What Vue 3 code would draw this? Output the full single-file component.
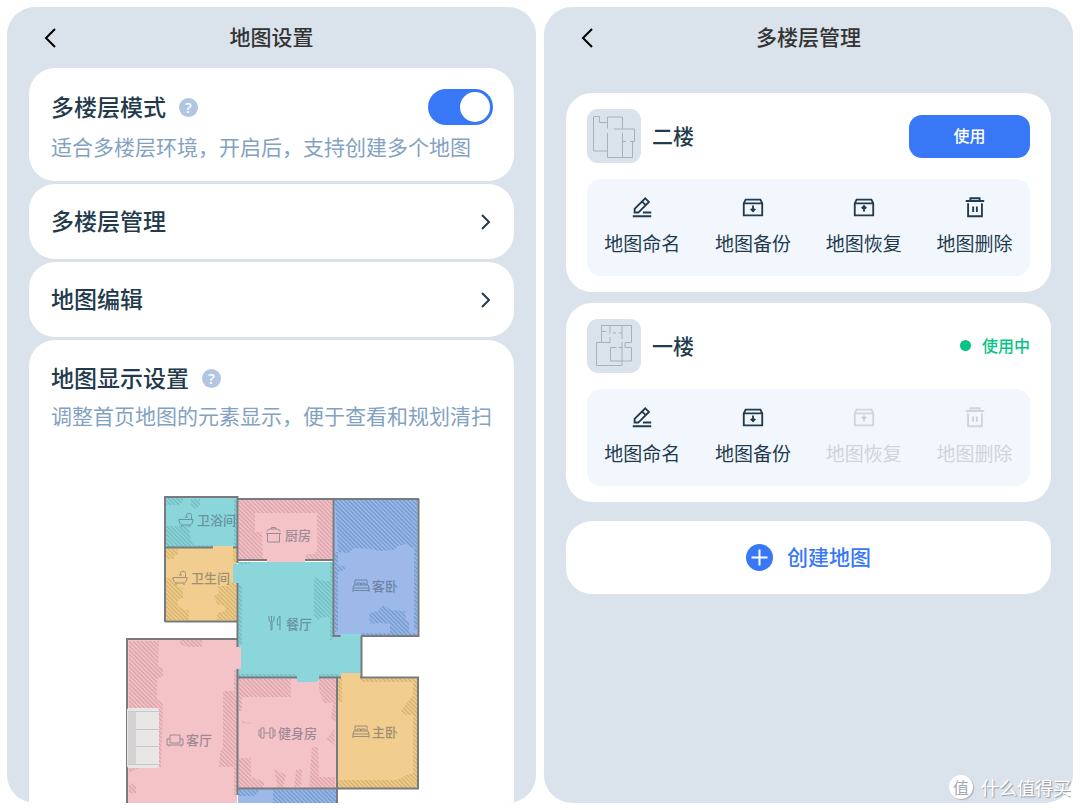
<template>
  <div class="page">
    <section class="panel">
      <header class="panel-header">
        <button class="back" type="button" aria-label="返回">
          <svg width="12" height="22" viewBox="0 0 12 22"><path d="M11 2 2 11l9 9" /></svg>
        </button>
        <h1>地图设置</h1>
      </header>

      <div class="settings">
        <div class="card setting">
          <div class="setting-title">
            <label for="multi-floor">多楼层模式</label>
            <button class="help" type="button" aria-label="多楼层模式说明">?</button>
            <input id="multi-floor" v-model="multiFloor" class="switch" type="checkbox" role="switch" />
          </div>
          <p class="desc">适合多楼层环境，开启后，支持创建多个地图</p>
        </div>

        <a v-for="link in links" :key="link" class="card link-row" href="#">
          <span>{{ link }}</span>
          <svg width="10" height="18" viewBox="0 0 10 18"><path d="m1 2 7 7-7 7" /></svg>
        </a>

        <div class="card setting map-card">
          <div class="setting-title">
            <h2>地图显示设置</h2>
            <button class="help" type="button" aria-label="地图显示设置说明">?</button>
          </div>
          <p class="desc">调整首页地图的元素显示，便于查看和规划清扫</p>

          <svg class="map" width="311" height="313" viewBox="116 490 311 313">
            <defs>
              <pattern
                v-for="(c, name) in colors"
                :id="'hatch-' + name"
                :key="name"
                width="3"
                height="3"
                patternUnits="userSpaceOnUse"
                patternTransform="rotate(-45)"
              >
                <rect width="1.3" height="3" :fill="c.hatch" />
              </pattern>
            </defs>

            <g v-for="room in rooms" :key="room.id">
              <path :d="room.area" :fill="colors[room.color].fill" />
              <path :d="room.hatch" :fill="`url(#hatch-${room.color})`" />
            </g>

            <path class="wall" :d="walls" />
            <path :d="gymDoor" :fill="colors.cyan.fill" />

            <g class="sofa">
              <rect x="127" y="708" width="32" height="60" rx="2" fill="#e9e6e6" />
              <rect x="128" y="711" width="8" height="54" fill="#d5d2d3" />
              <path d="M128 711.500h31M136 729.500h23M136 746.500h23M128 764.500h31" />
            </g>

            <g v-for="label in labels" :key="label.text" class="room-label">
              <path :d="icons[label.icon]" :transform="`translate(${label.ix} ${label.iy})`" />
              <text :x="label.x" :y="label.y">{{ label.text }}</text>
            </g>
          </svg>
        </div>
      </div>
    </section>

    <section class="panel">
      <header class="panel-header">
        <button class="back" type="button" aria-label="返回">
          <svg width="12" height="22" viewBox="0 0 12 22"><path d="M11 2 2 11l9 9" /></svg>
        </button>
        <h1>多楼层管理</h1>
      </header>

      <div class="floors">
        <article v-for="floor in floors" :key="floor.name" class="card floor">
          <div class="floor-head">
            <svg class="thumb" width="54" height="54" viewBox="0 0 54 54"><path :d="floor.plan" /></svg>
            <h2>{{ floor.name }}</h2>
            <span v-if="floor.active" class="active">使用中</span>
            <button v-else class="use" type="button">使用</button>
          </div>
          <div class="actions">
            <button
              v-for="action in actions"
              :key="action.text"
              type="button"
              :disabled="floor.active && action.lock"
            >
              <svg width="24" height="24" viewBox="-1 -1 26 26"><path :d="action.icon" /></svg>
              {{ action.text }}
            </button>
          </div>
        </article>
      </div>

      <button class="card create" type="button">
        <svg width="27" height="27" viewBox="0 0 27 27">
          <circle cx="13.500" cy="13.500" r="13.500" />
          <path d="M13.500 5.500v16M5.500 13.500h16" />
        </svg>
        <span>创建地图</span>
      </button>
    </section>

    <div class="watermark">
      <span class="watermark-logo">值</span>
      <span>什么值得买</span>
    </div>
  </div>
</template>

<script setup>
import { ref } from 'vue'

const multiFloor = ref(true)
const links = ['多楼层管理', '地图编辑']

const colors = {
  cyan: { fill: '#8bd6db', hatch: '#70b8bc' },
  orange: { fill: '#f1cd8f', hatch: '#d3b068' },
  pink: { fill: '#f3c3c8', hatch: '#d9a0a8' },
  blue: { fill: '#9cb9ea', hatch: '#6f98cc' },
}

// room areas, the doorways stick out a little into the next room
const rooms = [
  {
    id: 'bath',
    color: 'cyan',
    area: 'M165 497h72v51h-72z',
    hatch: 'M166 498h17v4l-4 3h-13zM191 499h9v6l-4 4-5-4zM166 526h22l2 8 1 7 3 4h19v2h-47zM234 500h3v46h-3z',
  },
  {
    id: 'toilet',
    color: 'orange',
    area: 'M165 548h48v-2h20v2h4v73h-72z',
    hatch:
      'M166 549h12v5l-4 2v3h-8zM166 578h6l3 6 8 5v9l-5 2v6l6 4h5v10h-23zM217 586h9l7-4h3v38h-19v-7l8-2v-5l-8-2-3-8 5-3zM233 549h4v13h-4z',
  },
  {
    id: 'kitchen',
    color: 'pink',
    area: 'M238 499h95v61h-28v2h-38v-2h-29z',
    hatch: 'M239 500h93v60h-26v-6h8l3-3v-38h-62v19h7l1 28h-24z',
  },
  {
    id: 'dining',
    color: 'cyan',
    area: 'M238 562h95v74h7v-3h21v44H238v-94h-5v-19h5z',
    hatch:
      'M239 585h3v60h-3zM240 562h10v2h-10zM314 577l10 4h8v36h-8l-6 3-4-4zM330 562h3v78h-3zM239 674h58v3h-58zM319 674h20v3h-20z',
  },
  {
    id: 'guest',
    color: 'blue',
    area: 'M334 499h84v137h-57v-2h-20v2h-7z',
    hatch:
      'M335 500h82v48h-4l-7-4-8 2-4 4-14 1-9-2-17-1-5 5-11-1zM335 552h3v80h-3zM338 565l8 2-2 3-6 2zM414 548h3v82h-3zM369 613l9-2 5-6 8 5 14 1 1 9 3 2v12h-19v-10l-9-1-11 1zM361 633h56v3h-56z',
  },
  {
    id: 'living',
    color: 'pink',
    area: 'M127 639h110v8h4v22h-4v134h-110z',
    hatch:
      'M129 641h30l-1 25 5 3v7l-6 3v20l6 5-2 63h-2v-59h-30zM180 640h22v7h-14l-8-3zM223 691h14v76h-18l1-15 3-5zM234 670h3v125h-3zM129 783l7 2v8h-7zM129 768h10l-10 5z',
  },
  {
    id: 'gym',
    color: 'pink',
    area: 'M238 678h98v110h-98z',
    hatch:
      'M239 679h52v18h-49v14h-3zM319 679h17v42l-5-2 2-16h-9l-5-13zM326 740l8-11 1 16zM242 721l13 3-13-1zM239 758h12v19l14 5-2 6h-24zM312 746l6 2 1 29h16v11h-26zM274 769l12 6-3 13h-5zM296 770l6-1-1 17-7 2z',
  },
  {
    id: 'master',
    color: 'orange',
    area: 'M338 678h3v-5h20v5h57v110h-80z',
    hatch:
      'M361 679h56v3h-56zM413 682h4v92h-4zM338 780h59l12-6h8v14h-79zM338 679h4v23h-4zM401 711l11-15 3 2v17h-9z',
  },
  {
    id: 'balcony',
    color: 'blue',
    area: 'M238 789h98v14h-98z',
    hatch: 'M239 790h21l-6 6h-15zM273 790h63v13h-63z',
  },
]

const walls = [
  'M213 547.500H165M233 547.500h4M165 496v126M164 497h73M165 621.500h73',
  'M237.500 496v67M237.500 583v64M237 499h182M267 560h-29M305 560h28',
  'M333.500 499v137h7M361 636h57.500V499M361.500 636v42',
  'M237 639H127v164M237.500 669v126M238 677.500h59M319 677.500h22',
  'M360 677.500h58v111M238 788.500h181M337 678v125',
].join('')

const gymDoor = 'M297 676h22v4l-2 2h-19l-1-1z'

const icons = {
  tub: 'M0 6.500h14c0 4-2 5.500-4 5.500H4C2 12 0 10.500 0 6.500M3 12v2M11 12v2M12.500 6.500V2.500c0-3-5-3-5 0v1M6 4h3',
  pot: 'M1.500 6.500h12V15h-12zM0 6.500h15M1 4.500C1 2.500 3 2 5 2h5c2 0 4 .5 4 2.500M5.500 2V.5h4V2',
  fork: 'M0 0v4l2 3v7h1V7l2-3V0M2.500 0v6M11 14V0C8 2 8 6 8.500 9H11',
  bed: 'M2 6V1h12v5M1 6h14l1 3v4M0 13V9l1-3M0 9h16M0 11.500h16M4 6V4h3.500v2M8.500 6V4H12v2',
  sofa: 'M3 5V1h10v4M3 9h10M3 9V5H0v6h16V5h-3v4M2 11v1.500M14 11v1.500',
  gym: 'M3 1h3v10H3zM12 1h3v10h-3zM6 6h6M3 3H1v6h2M15 3h2v6h-2',
}

const labels = [
  { text: '卫浴间', icon: 'tub', ix: 179, iy: 513, x: 197, y: 525 },
  { text: '卫生间', icon: 'tub', ix: 173, iy: 571, x: 191, y: 583 },
  { text: '厨房', icon: 'pot', ix: 266, iy: 527, x: 285, y: 540 },
  { text: '餐厅', icon: 'fork', ix: 269, iy: 616, x: 286, y: 629 },
  { text: '客卧', icon: 'bed', ix: 353, iy: 579, x: 372, y: 591 },
  { text: '客厅', icon: 'sofa', ix: 167, iy: 734, x: 186, y: 745 },
  { text: '健身房', icon: 'gym', ix: 258, iy: 727, x: 278, y: 738 },
  { text: '主卧', icon: 'bed', ix: 353, iy: 725, x: 372, y: 737 },
]

const floors = [
  {
    name: '二楼',
    active: false,
    plan: 'M20.500 13.500h-8V7.500H6.500v34.500H20.500M20.500 19.500V8h15v12M27 20h20.500v12.500H43M39 32.500h-3M45.500 32.500v16h-25V24M35.500 24v24',
  },
  {
    name: '一楼',
    active: true,
    plan: 'M14.500 23V6.500h30v17H38v5h6.500v13.500H23.500V28.500h6M32 28.500h3M23.500 23.500H9.500v23h25.500V23M35 20V6.500M23 6.500v8M23 18v6M14.500 12.500h5M26 14h3M32 14h3',
  },
]

const boxShape = 'M2 8l2-4h16l2 4v13H2zM2 8h20'

// lock: not available on the map in use
const actions = [
  {
    text: '地图命名',
    lock: false,
    icon: 'M4 18v-4L15.500 2.500l4 4L8 18zM12 6l4 4M13 18h9M2 22h20',
  },
  { text: '地图备份', lock: false, icon: boxShape + 'M12 10.500V16M9.500 14l2.500 2.500 2.500-2.500' },
  { text: '地图恢复', lock: true, icon: boxShape + 'M12 17v-5.500M9.500 13.500l2.500-2.500 2.500 2.500' },
  {
    text: '地图删除',
    lock: true,
    icon: 'M2 5.500h20M7 5.500v-3h10v3M4.500 8v14h15V8M10 11.500v6M14 11.500v6',
  },
]
</script>

<style>
body {
  margin: 0;
  background: #fff;
}
</style>

<style scoped>
.page {
  position: relative;
  display: grid;
  grid-template-columns: 1fr 1fr;
  gap: 8px;
  box-sizing: border-box;
  min-height: 100vh;
  padding: 7px;
  font-family: "Noto Sans CJK SC", sans-serif;
  color: #233a4d;
}

h1,
h2,
p {
  margin: 0;
}

button {
  padding: 0;
  border: 0;
  background: none;
  font-family: inherit;
  color: inherit;
  cursor: pointer;
}

svg {
  flex: none;
  fill: none;
}

.panel {
  display: flex;
  flex-direction: column;
  overflow: hidden;
  padding: 0 22px;
  border-radius: 28px;
  background: #dae2eb;
}

.panel-header {
  display: grid;
  grid-template-columns: 40px 1fr 40px;
  align-items: center;
  height: 61px;
}

.panel-header h1 {
  padding-bottom: 3px;
  font-size: 21px;
  font-weight: 500;
  line-height: 28px;
  text-align: center;
  color: #333;
}

.back {
  display: flex;
  padding-left: 15px;
}

.back path {
  stroke: #000;
  stroke-width: 2;
}

.card {
  border-radius: 26px;
  background: #fff;
}

.settings {
  display: flex;
  flex: 1;
  flex-direction: column;
  gap: 3px;
}

.setting {
  padding: 21px 21px 21px 22px;
}

.setting-title {
  display: flex;
  align-items: center;
  gap: 13px;
  height: 36px;
}

.setting-title label,
.setting-title h2,
.link-row span {
  padding-bottom: 3px;
  font-size: 23px;
  font-weight: 500;
  line-height: 32px;
}

.help {
  width: 19px;
  height: 19px;
  border-radius: 50%;
  background: #b1c6e1;
  font-family: "Open Sans", sans-serif;
  font-size: 15px;
  font-weight: 600;
  line-height: 19px;
  color: #fff;
}

.switch {
  appearance: none;
  box-sizing: border-box;
  width: 65px;
  height: 36px;
  margin: 0 0 0 auto;
  padding: 3px;
  border-radius: 18px;
  background: #c5ced9;
  cursor: pointer;
}

.switch::before {
  content: '';
  display: block;
  width: 30px;
  height: 30px;
  border-radius: 50%;
  background: #fff;
}

.switch:checked {
  background: #3878f7;
}

.switch:checked::before {
  margin-left: auto;
}

.desc {
  margin-top: 7px;
  font-size: 21px;
  line-height: 28px;
  white-space: nowrap;
  color: #83a2c2;
}

.link-row {
  display: flex;
  align-items: center;
  justify-content: space-between;
  height: 75px;
  padding: 0 23px 0 22px;
  color: inherit;
  text-decoration: none;
}

.link-row path {
  stroke: #233a4d;
  stroke-width: 2;
}

.map-card {
  flex: 1;
  padding: 20px 22px 0;
  border-radius: 26px 26px 0 0;
}

.map-card .desc {
  margin-top: 5px;
}

.map {
  display: block;
  margin: 61px auto 0;
}

.wall {
  stroke: #777b7e;
  stroke-width: 2;
}

.sofa path {
  stroke: #c9c6c8;
}

.room-label {
  opacity: 0.45;
}

.room-label path {
  stroke: #3b4557;
}

.room-label text {
  fill: #3b4557;
  font-size: 13px;
  font-weight: 500;
}

.floors {
  display: grid;
  gap: 11px;
  margin-top: 25px;
}

.floor {
  padding: 16px 21px;
}

.floor-head {
  display: flex;
  align-items: center;
  gap: 11px;
}

.floor-head h2 {
  padding-bottom: 3px;
  font-size: 21px;
  font-weight: 500;
  line-height: 28px;
}

.thumb {
  border-radius: 11px;
  background: #dae2eb;
}

.thumb path {
  stroke: #a9b0b8;
}

.use {
  width: 121px;
  height: 43px;
  margin-left: auto;
  padding-bottom: 2px;
  border-radius: 13px;
  background: #3878f7;
  font-size: 16px;
  font-weight: 500;
  color: #fff;
}

.active {
  display: flex;
  align-items: center;
  gap: 11px;
  margin-left: auto;
  padding-bottom: 2px;
  font-size: 16px;
  font-weight: 500;
  color: #06c584;
}

.active::before {
  content: '';
  width: 11px;
  height: 11px;
  border-radius: 50%;
  background: currentColor;
}

.actions {
  display: grid;
  grid-template-columns: repeat(4, 1fr);
  margin-top: 16px;
  padding: 16px 0 19px;
  border-radius: 14px;
  background: #f2f7fe;
}

.actions button {
  display: flex;
  flex-direction: column;
  align-items: center;
  gap: 10px;
  font-size: 19px;
  line-height: 28px;
  white-space: nowrap;
}

.actions button:disabled {
  color: #cfd4da;
  cursor: default;
}

.actions path {
  stroke: currentColor;
  stroke-width: 2;
}

.create {
  display: flex;
  align-items: center;
  justify-content: center;
  gap: 14px;
  height: 73px;
  margin-top: 19px;
  font-size: 21px;
  font-weight: 500;
  color: #3878f7;
}

.create span {
  padding-bottom: 3px;
}

.create circle {
  fill: #3878f7;
}

.create path {
  stroke: #fff;
  stroke-width: 2;
}

.watermark {
  position: absolute;
  right: 9px;
  bottom: 10px;
  display: flex;
  align-items: center;
  gap: 8px;
  font-size: 18px;
  line-height: 26px;
  color: #fff;
  text-shadow: 1px 1px 1px #8e969f;
}

.watermark-logo {
  width: 24px;
  height: 24px;
  border-radius: 50%;
  background: #fff;
  box-shadow: 1px 1px 1px #a9b1ba;
  font-size: 16px;
  line-height: 24px;
  text-align: center;
  text-shadow: none;
  color: #a3abb5;
}
</style>
